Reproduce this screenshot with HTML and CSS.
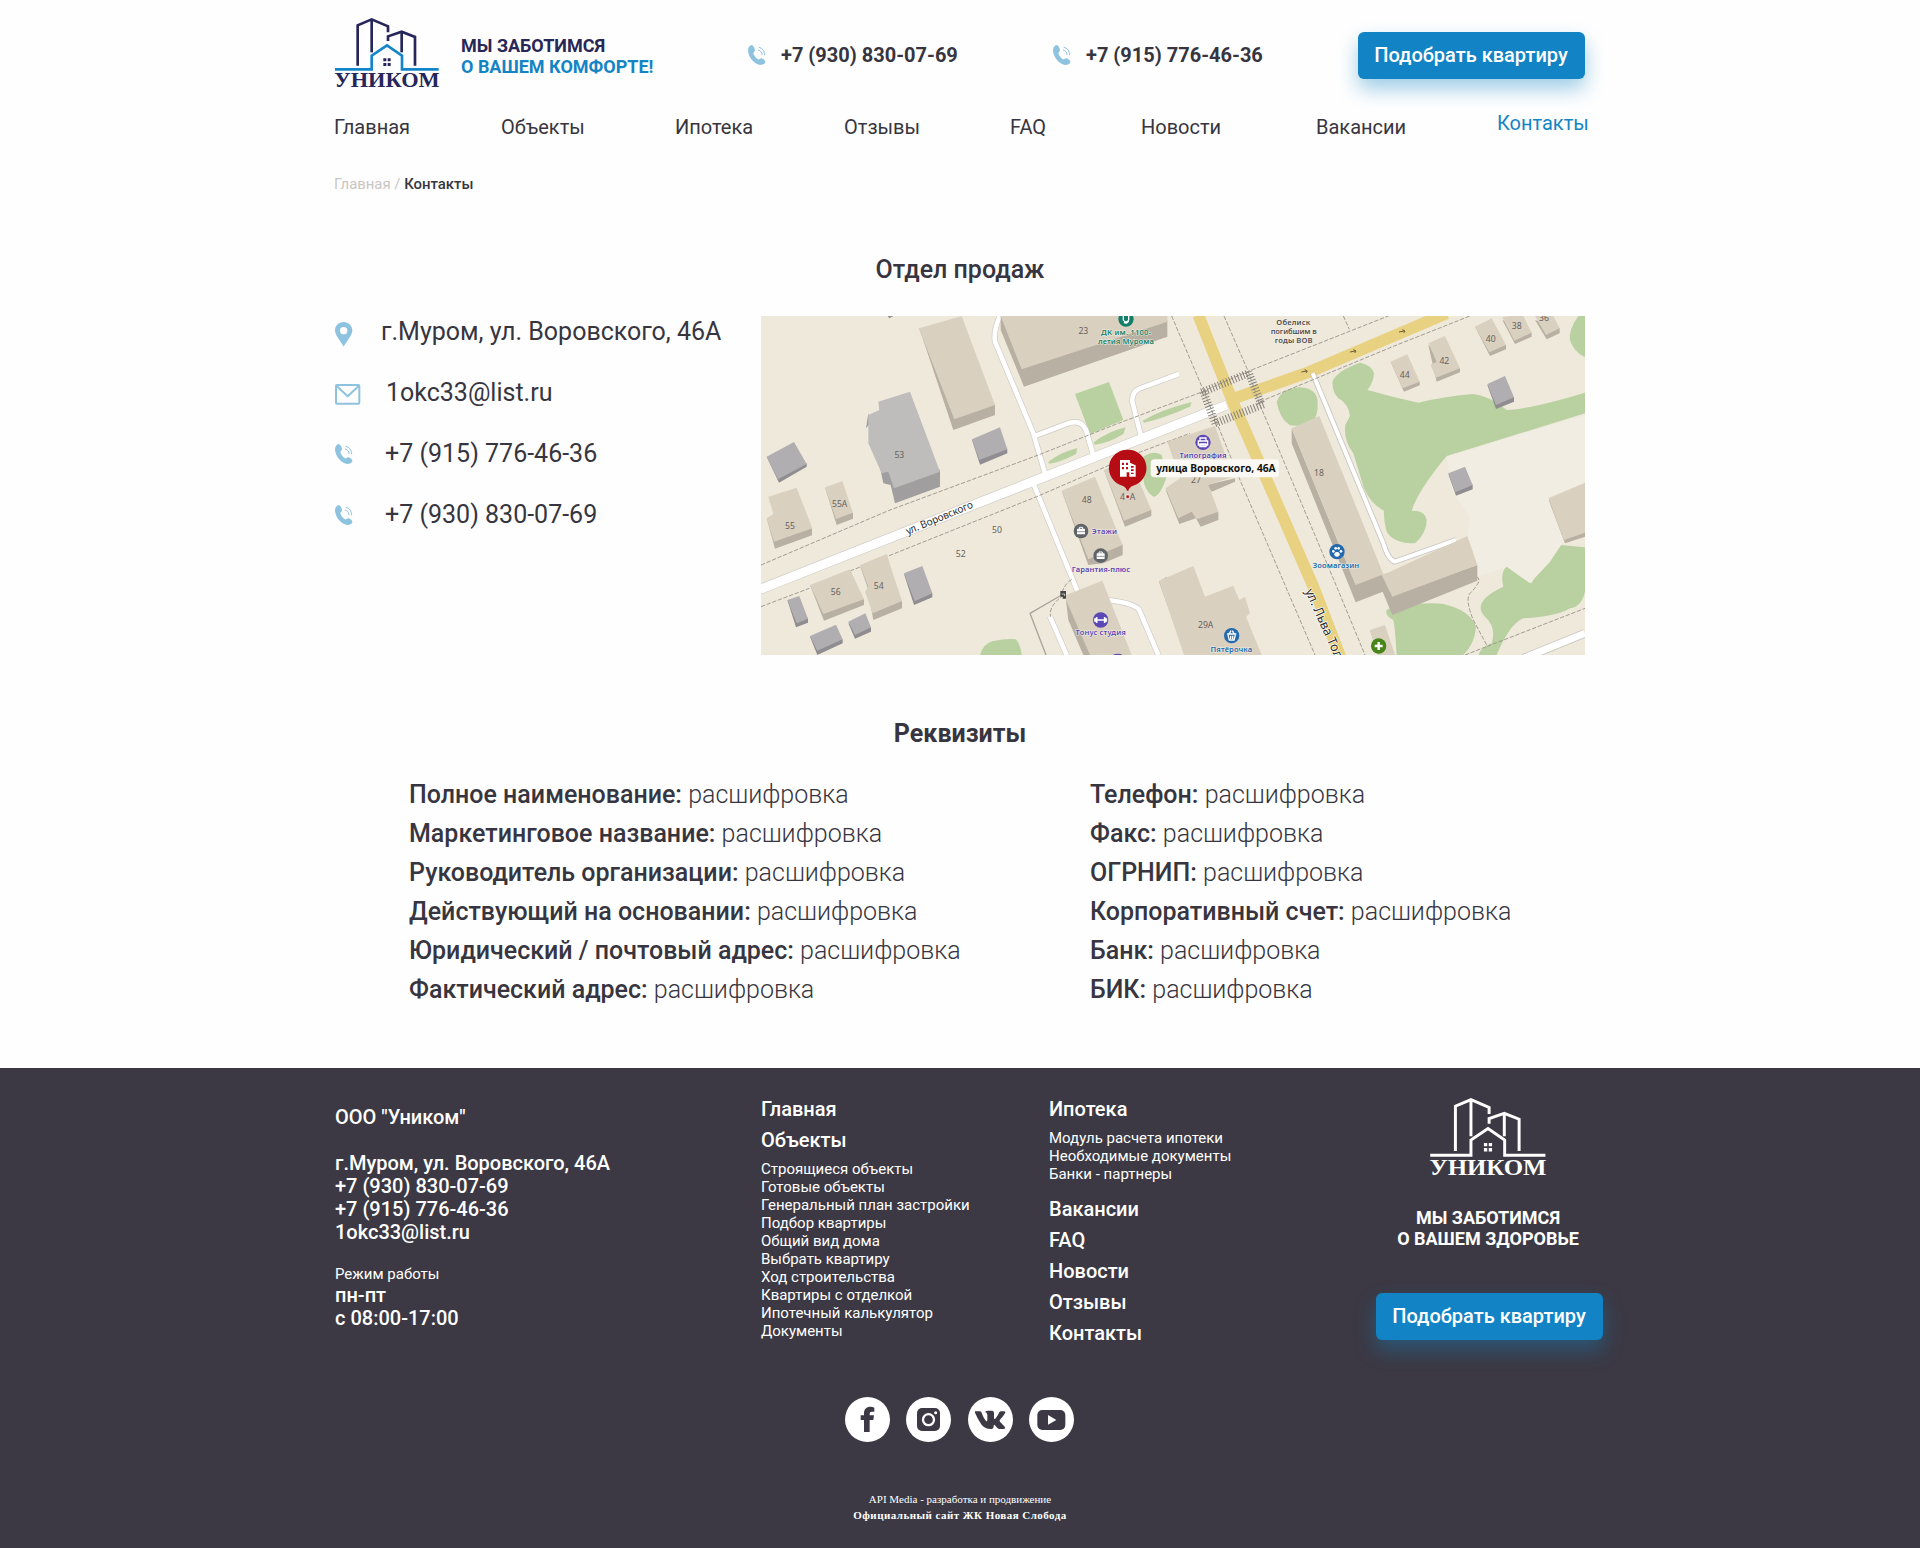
FILE: index.html
```html
<!DOCTYPE html>
<html lang="ru">
<head>
<meta charset="utf-8">
<title>Уником — Контакты</title>
<link rel="stylesheet" href="styles.css">
</head>
<body>
<svg class="defs" width="0" height="0" aria-hidden="true">
  <symbol id="logo" viewBox="42 52 318 216">
    <g fill="none" stroke="currentColor" stroke-width="8">
      <path d="M113 198V77L155 59L204 80V98"/>
      <path d="M155 59V158"/>
      <path d="M204 124V110L245 96L285 112V198"/>
      <path d="M245 96V158"/>
    </g>
    <path class="logo-roof" fill="none" stroke-width="8" d="M45 209H155V168L201 137L246 168V209H356"/>
    <path fill="currentColor" d="M190 176h9v9h-9zM203 176h9v9h-9zM190 190h9v9h-9zM203 190h9v9h-9z"/>
    <text class="logo-text" x="43" y="263" textLength="316" lengthAdjust="spacingAndGlyphs" fill="currentColor">УНИКОМ</text>
  </symbol>
  <symbol id="phone" viewBox="0 0 54 60">
    <path fill="currentColor" d="M10 0C4 2 0 8 0 17C2 38 18 56 36 60C44 60 52 56 52 50C52 46 44 40 40 40C36 40 34 44 30 43C24 40 18 32 16 25C16 22 21 20 21 16C21 10 16 0 10 0Z"/>
    <path fill="none" stroke="currentColor" stroke-width="3" d="M32 7C43 9 50 18 50 31M30 15C37 16 42 22 42 30"/>
  </symbol>
</svg>

<header class="wrap">
  <div class="top">
    <svg class="logo" width="106" height="72"><use href="#logo"/></svg>
    <p class="slogan">МЫ ЗАБОТИМСЯ<br><span>О ВАШЕМ КОМФОРТЕ!</span></p>
    <a class="tel"><svg class="icon" width="18" height="20"><use href="#phone"/></svg>+7 (930) 830-07-69</a>
    <a class="tel"><svg class="icon" width="18" height="20"><use href="#phone"/></svg>+7 (915) 776-46-36</a>
    <a class="btn">Подобрать квартиру</a>
  </div>
  <nav class="nav">
    <a>Главная</a><a>Объекты</a><a>Ипотека</a><a>Отзывы</a><a>FAQ</a><a>Новости</a><a>Вакансии</a><a class="active">Контакты</a>
  </nav>
  <p class="crumbs">Главная / <b>Контакты</b></p>
</header>

<main class="wrap">
  <h1>Отдел продаж</h1>
  <section class="sales">
    <ul class="contacts">
      <li class="addr"><svg class="icon pin" width="18" height="25" viewBox="0 0 54 75"><path fill="currentColor" fill-rule="evenodd" d="M26 0C11 0 0 11 0 25C0 41 17 57 26 74C35 57 52 41 52 25C52 11 41 0 26 0ZM26 15A11 11 0 1 1 26 37A11 11 0 1 1 26 15Z"/></svg>г.Муром, ул. Воровского, 46А</li>
      <li class="mail"><svg class="icon envelope" width="26" height="21" viewBox="0 0 78 63"><g fill="none" stroke="currentColor" stroke-width="6" stroke-linejoin="round"><rect x="3" y="3" width="70" height="56" rx="3"/><path d="M4 5L38 37L72 5"/></g></svg>1okc33@list.ru</li>
      <li><svg class="icon" width="18" height="20"><use href="#phone"/></svg>+7 (915) 776-46-36</li>
      <li><svg class="icon" width="18" height="20"><use href="#phone"/></svg>+7 (930) 830-07-69</li>
    </ul>
    <svg class="map" width="824" height="339" viewBox="3 18 2472 1017">
      <rect x="3" y="18" width="2472" height="1017" fill="#eee9db"/>
      <!-- parks -->
      <g fill="#b9d1a1">
        <path d="M945 252L1047 216L1090 330L990 372Z"/>
        <path d="M865 455Q900 428 952 414L948 432Q900 458 866 461Z"/>
        <path d="M1000 398Q1040 366 1097 352L1090 372Q1045 400 1005 404Z"/>
        <path d="M1148 332Q1200 300 1295 276L1290 290Q1210 325 1152 338Z"/>
        <path d="M1150 440Q1180 420 1205 435L1220 500Q1200 560 1180 560Q1150 540 1150 500Z"/>
        <path d="M660 1035Q670 1000 700 993Q740 985 768 988Q782 1005 785 1035Z"/>
        <path d="M1550 275Q1565 235 1620 232Q1670 235 1673 275Q1675 320 1655 338Q1625 350 1590 346Q1558 325 1550 275Z"/>
        <path d="M1718 212Q1735 180 1800 158Q1835 165 1842 190Q1840 220 1822 240Q1900 262 1975 278Q2060 258 2140 252Q2190 258 2240 300Q2300 300 2475 248V310L2060 438Q1975 540 1955 602Q1995 600 2000 630Q2000 670 1965 700Q1900 700 1880 665Q1870 630 1872 602Q1830 580 1812 535Q1795 480 1780 430Q1750 390 1756 345L1770 318Q1765 280 1735 265Q1715 245 1718 212Z"/>
        <path d="M2455 18Q2425 60 2430 90Q2440 125 2475 142V18Z"/>
        <path d="M1878 905Q1880 895 1900 893Q1990 875 2050 882Q2130 900 2148 950Q2145 1000 2110 1035H1910Q1905 950 1900 930Q1880 920 1878 905Z"/>
        <path d="M2162 890Q2165 860 2230 830Q2220 785 2240 770Q2262 770 2315 820Q2330 780 2370 755Q2365 710 2400 705L2475 712V845Q2465 890 2430 895Q2390 920 2290 925Q2250 940 2210 1035H2155Q2165 1010 2195 1000Q2210 950 2175 920Q2160 905 2162 890Z"/>
      </g>
      <path fill="#f1ede2" d="M2060 440L2475 315V520L2365 560L2410 695L2370 755L2310 820L2240 770L2150 800L2120 690L2130 620L2080 550Z"/>
      <!-- streets -->
      <g fill="none" stroke-linejoin="round" stroke-linecap="butt">
        <g stroke="#cfcbc6">
          <path stroke-width="31" d="M0 838L860 498L1400 285"/>
          <path stroke-width="18" d="M720 18Q700 60 705 95L820 370L858 500M820 380L930 338Q965 330 978 360L1000 435M820 520L955 850M1142 375L1117 275Q1115 245 1140 235L1257 192M870 920L920 1035M1035 870Q1110 875 1137 898L1195 1035"/>
        </g>
        <g stroke="#fff">
          <path stroke-width="27" d="M0 838L860 498L1400 285"/>
          <path stroke-width="14" d="M720 18Q700 60 705 95L820 370L858 500M820 380L930 338Q965 330 978 360L1000 435M820 520L955 850M1142 375L1117 275Q1115 245 1140 235L1257 192M870 920L920 1035M1035 870Q1110 875 1137 898L1195 1035"/>
        </g>
        <path stroke="#c9c5c0" stroke-width="26" d="M2290 1045L2475 970"/>
        <path stroke="#fff" stroke-width="21" d="M2290 1045L2475 970"/>
        <path stroke="#e8d281" stroke-width="35" d="M1315 15L1420 280L1660 830L1745 1050M1415 268L1650 185L2060 10"/>
        <path stroke="#c9c5c0" stroke-width="17" d="M1658 190L1870 700Q1885 750 1905 755L2088 690"/>
        <path stroke="#fff" stroke-width="12" d="M1658 190L1870 700Q1885 750 1905 755L2088 690"/>
        <path stroke="#aaa59b" stroke-width="4" d="M905 855L810 910L858 1035"/>
        <g stroke="#918c83" stroke-width="2.5" stroke-dasharray="13 5">
          <path d="M3 765L385 602L835 435L1075 340L1320 248L1462 185L1885 18M3 890L148 835M270 783L380 740L830 560L1130 430L1290 370"/>
          <path d="M1235 18L1330 240L1375 350L1440 510L1665 1035M1392 18L1465 185L1500 285L1730 830L1815 1035M1500 275L1905 107L2130 18M1750 18L1768 58"/>
          <path d="M2150 800Q2170 810 2130 850Q2115 870 2140 930L2180 1005M2115 1035L2475 895M935 808Q905 830 905 860Q865 890 872 920"/>
        </g>
      </g>
      <g fill="none" stroke="#858179" stroke-width="24" stroke-dasharray="3 6">
        <path d="M1325 247L1465 190M1465 185L1505 285M1365 340L1510 283M1330 245L1368 345"/>
      </g>
      <!-- building walls -->
      <g fill="#b8b0a2">
        <path d="M477 55L488 85L580 360L705 315V285Z"/><path d="M722 18V60L792 230L1222 80V30Z"/>
        <path d="M20 625L45 716L156 676V655Z"/><path d="M195 532L230 645L279 626V610Z"/>
        <path d="M150 825L192 932L312 885V868Z"/><path d="M300 768L322 830L340 930L426 895V875Z"/>
        <path d="M905 542L985 765L1030 760L1088 735V705Z"/><path d="M1032 480L1095 650L1174 618V600Z"/>
        <path d="M918 870L925 930L970 1035H1050V870Z"/><path d="M1217 540L1258 642L1308 625L1322 650L1375 630V605Z"/>
        <path d="M1595 355V400L1787 877L1868 845L1897 915L2152 812V765L1897 855L1865 790L1785 820Z"/>
        <path d="M1340 525L1425 505V515L1355 545Z"/><path d="M1197 815L1275 1035H1330L1220 800Z"/>
        <path d="M2366 570L2415 700L2475 680V600Z"/><path d="M1892 155L1932 245L1979 226V215Z"/>
        <path d="M2005 105L2030 215L2100 187V175Z"/><path d="M2145 50L2190 138L2238 118V105Z"/>
        <path d="M2227 30L2265 102L2315 80V68ZM2325 30L2360 88L2399 70V55ZM1830 960L1855 1035H1905L1860 970Z"/>
      </g>
      <!-- building roofs -->
      <g fill="#dad0c0">
        <path d="M477 55L605 18L705 285L583 328Z"/><path d="M722 18H1222V35L785 178Z"/>
        <path d="M25 560L110 533L157 655L42 695L20 625L40 612Z"/><path d="M195 532L247 514L279 608L228 627Z"/>
        <path d="M150 825L270 778L312 868L190 912Z"/><path d="M300 765L380 732L400 795L426 873L338 910L315 845L325 830Z"/>
        <path d="M905 542L1005 500L1088 705L985 748Z"/><path d="M1032 480L1110 450L1174 600L1092 632Z"/>
        <path d="M918 855L1027 812L1115 1035H990L918 870Z"/><path d="M1222 395L1365 348L1420 500L1345 525L1375 605L1310 628L1295 605L1255 625L1217 535L1260 505Z"/>
        <path d="M1595 355L1678 318L1870 792L1890 785L2122 678L2152 765L1897 860L1865 795L1787 825Z"/>
        <path d="M1197 812L1300 768L1335 860L1420 827L1438 870L1455 860L1470 910L1458 920L1505 1035H1272Z"/>
        <path d="M2366 565L2475 518V668L2412 690Z"/><path d="M1892 155L1942 133L1979 215L1928 235Z"/>
        <path d="M2005 100L2055 78L2100 175L2028 203L2012 165L2030 155Z"/><path d="M2145 50L2195 25L2238 105L2188 127Z"/>
        <path d="M2227 22L2250 18H2290L2315 68L2263 92ZM2325 18H2380L2399 55L2358 75ZM1830 960L1875 945L1905 1035H1855Z"/>
      </g>
      <g fill="#8f8d90">
        <path fill="#a09e9e" d="M318 355L325 310L370 520L392 525L405 580L540 530V480L330 340Z"/>
        <path d="M20 440L57 518L140 470V460Z"/><path d="M636 390L660 464L742 430V418Z"/>
        <path d="M82 870L108 952L144 938V925ZM150 980L172 1035L248 1000V988ZM265 940L285 986L333 965V952ZM432 792L462 885L517 862V850Z"/>
        <path d="M2182 225L2208 297L2262 275V262ZM2065 492L2088 557L2138 538V524ZM383 18L388 25L400 18Z"/>
      </g>
      <path fill="#bfbdbb" d="M355 275L450 245L540 485L402 535L385 485L365 490L325 400V315L358 300Z"/>
      <g fill="#b1aeb2">
        <path d="M20 440L102 396L140 462L54 508Z"/><path d="M636 388L720 352L742 418L658 450Z"/>
        <path d="M82 870L118 858L144 926L110 940Z"/><path d="M150 978L228 944L248 988L172 1022Z"/><path d="M265 935L316 910L333 952L285 975Z"/><path d="M432 790L487 768L517 850L464 874Z"/>
        <path d="M2182 222L2235 198L2262 262L2208 285Z"/><path d="M2065 490L2115 470L2138 525L2086 547Z"/>
      </g>
      <!-- house numbers -->
      <g class="num">
        <text x="970" y="73">23</text><text x="418" y="444">53</text><text x="239" y="592">55А</text><text x="90" y="656">55</text>
        <text x="711" y="669">50</text><text x="602" y="742">52</text><text x="356" y="838">54</text><text x="227" y="855">56</text>
        <text x="980" y="580">48</text><text x="1103" y="570">4&#8199;А</text><text x="1308" y="518">27</text><text x="1677" y="498">18</text>
        <text x="1337" y="953">29А</text><text x="1934" y="205">44</text><text x="2053" y="163">42</text><text x="2192" y="95">40</text>
        <text x="2270" y="56">38</text><text x="2352" y="34">36</text>
      </g>
      <g class="street">
        <text transform="translate(443 674) rotate(-22.5)" textLength="214" lengthAdjust="spacingAndGlyphs">ул. Воровского</text>
        <text class="avenue" transform="translate(1635 843) rotate(66)" textLength="225" lengthAdjust="spacingAndGlyphs">ул. Льва Тол</text>
      </g>
      <!-- places -->
      <g class="poi">
        <g fill="#128068"><circle cx="1098" cy="27" r="23"/><text x="1098" y="75" textLength="150">ДК им. 1100-</text><text x="1098" y="102" textLength="168">летия Мурома</text></g>
        <g fill="#514e50"><text x="1600" y="44" textLength="102">Обелиск</text><text x="1601" y="71" textLength="138">погибшим в</text><text x="1601" y="98" textLength="113">годы ВОВ</text></g>
        <g fill="#5f6468"><circle cx="963" cy="663" r="22"/><circle cx="1022" cy="737" r="22"/></g>
        <g fill="#5b47b5"><circle cx="1022" cy="930" r="23"/><circle cx="1329" cy="397" r="23"/><path d="M1058 1035Q1075 1028 1088 1035Z"/>
          <text x="1033" y="671" textLength="76">Этажи</text><text x="1023" y="785" textLength="175">Гарантия-плюс</text><text x="1022" y="976" textLength="151">Тонус студия</text><text x="1329" y="445" textLength="141">Типография</text></g>
        <g fill="#2269ae"><circle cx="1731" cy="725" r="23"/><circle cx="1415" cy="977" r="23"/>
          <text x="1728" y="773" textLength="139">Зоомагазин</text><text x="1414" y="1026" textLength="125">Пятёрочка</text></g>
        <circle cx="1856" cy="1008" r="23" fill="#468518"/>
      </g>
      <g fill="#fff">
        <rect x="951" y="656" width="24" height="17" rx="2"/><rect x="1010" y="730" width="24" height="17" rx="2"/>
      </g>
      <path fill="none" stroke="#5f6468" stroke-width="2" d="M951 665h24M1010 739h24"/>
      <g fill="none" stroke="#fff" stroke-width="4">
        <path stroke-width="3" d="M958 657v-5h10v5M1017 731v-5h10v5"/>
        <path stroke-width="5" d="M1010 921v18M1034 921v18M1005 925v10M1039 925v10M1012 930h20"/>
        <path d="M1315 393h28v12h-28zM1320 391v-7h18v7M1320 402h18v8h-18z"/>
        <path d="M1401 972h28M1404 975l4 15h14l4-15M1408 971l5-9M1422 971l-5-9M1412 977v10M1418 977v10"/>
        <path stroke-width="7" d="M1844 1008h24M1856 996v24"/>
        <path d="M1090 18v12q8 12 16 0v-12M1092 37q8 6 14-4"/>
      </g>
      <g fill="#fff"><ellipse cx="1731" cy="733" rx="8" ry="7"/><circle cx="1720" cy="724" r="4"/><circle cx="1727" cy="715" r="4"/><circle cx="1736" cy="715" r="4"/><circle cx="1743" cy="724" r="4"/></g>
      <path fill="#454545" d="M901 843h17v23h-10v-6h-7z"/><path fill="none" stroke="#fff" stroke-width="2" d="M905 852h9v6"/>
      <path fill="none" stroke="#6d5e35" stroke-width="3" d="M1624 186l16-3m-6-4l8 4l-4 6M1770 126l16-3m-6-4l8 4l-4 6M1917 66l16-3m-6-4l8 4l-4 6"/>
      <!-- address pin -->
      <rect x="1172" y="448" width="385" height="54" rx="12" fill="#faf9f5"/>
      <text class="pin-label" x="1189" y="486" textLength="358" lengthAdjust="spacingAndGlyphs">улица Воровского, 46А</text>
      <path fill="#b60c14" d="M1103 419a55 55 0 0 1 16 108q-11 4-14 15h-4q-3-11-14-15a55 55 0 0 1 16-108z"/>
      <path fill="#b60c14" stroke="#fff" stroke-width="2" d="M1098 555h10v10h-10z"/>
      <path fill="#fff" fill-rule="evenodd" d="M1080 450h30v8l17 8v34h-19v-13h-8v13h-20zM1086 458v7h6v-7zM1098 458v7h6v-7zM1086 471v7h6v-7zM1098 471v7h6v-7zM1113 468v5h8v-5zM1113 478v5h8v-5zM1113 488v4h8v-4z"/>
    </svg>
  </section>

  <h2>Реквизиты</h2>
  <section class="details">
    <dl>
      <div><dt>Полное наименование:</dt> <dd>расшифровка</dd></div>
      <div><dt>Маркетинговое название:</dt> <dd>расшифровка</dd></div>
      <div><dt>Руководитель организации:</dt> <dd>расшифровка</dd></div>
      <div><dt>Действующий на основании:</dt> <dd>расшифровка</dd></div>
      <div><dt>Юридический / почтовый адрес:</dt> <dd>расшифровка</dd></div>
      <div><dt>Фактический адрес:</dt> <dd>расшифровка</dd></div>
    </dl>
    <dl>
      <div><dt>Телефон:</dt> <dd>расшифровка</dd></div>
      <div><dt>Факс:</dt> <dd>расшифровка</dd></div>
      <div><dt>ОГРНИП:</dt> <dd>расшифровка</dd></div>
      <div><dt>Корпоративный счет:</dt> <dd>расшифровка</dd></div>
      <div><dt>Банк:</dt> <dd>расшифровка</dd></div>
      <div><dt>БИК:</dt> <dd>расшифровка</dd></div>
    </dl>
  </section>
</main>

<footer class="footer">
  <div class="foot-grid">
    <div class="company">
      <p>ООО "Уником"</p>
      <p class="reach">г.Муром, ул. Воровского, 46А<br>+7 (930) 830-07-69<br>+7 (915) 776-46-36<br>1okc33@list.ru</p>
      <p class="hours-title">Режим работы</p>
      <p>пн-пт<br>с 08:00-17:00</p>
    </div>
    <div class="links">
      <a>Главная</a>
      <a>Объекты</a>
      <ul>
        <li>Строящиеся объекты</li><li>Готовые объекты</li><li>Генеральный план застройки</li><li>Подбор квартиры</li><li>Общий вид дома</li><li>Выбрать квартиру</li><li>Ход строительства</li><li>Квартиры с отделкой</li><li>Ипотечный калькулятор</li><li>Документы</li>
      </ul>
    </div>
    <div class="links">
      <a>Ипотека</a>
      <ul>
        <li>Модуль расчета ипотеки</li><li>Необходимые документы</li><li>Банки - партнеры</li>
      </ul>
      <a>Вакансии</a>
      <a>FAQ</a>
      <a>Новости</a>
      <a>Отзывы</a>
      <a>Контакты</a>
    </div>
    <div class="brand">
      <svg class="logo-light" width="118" height="80"><use href="#logo"/></svg>
      <p class="slogan">МЫ ЗАБОТИМСЯ<br>О ВАШЕМ ЗДОРОВЬЕ</p>
      <a class="btn">Подобрать квартиру</a>
    </div>
  </div>
  <div class="social">
    <svg width="45" height="45" viewBox="0 0 135 135"><circle cx="67.500" cy="67.500" r="67.500" fill="#fff"/><path fill="currentColor" d="M57 105V69H47V55H57V48C57 36 65 29 76 29Q83 29 88 32V44H80Q74 44 74 50V55H87L85 69H74V105Z"/></svg>
    <svg width="45" height="45" viewBox="0 0 135 135"><circle cx="67.500" cy="67.500" r="67.500" fill="#fff"/><rect x="33" y="33" width="69" height="69" rx="15" fill="currentColor"/><circle cx="67.500" cy="68" r="16.500" fill="none" stroke="#fff" stroke-width="7"/><circle cx="89" cy="47" r="4.500" fill="#fff"/></svg>
    <svg width="45" height="45" viewBox="0 0 135 135"><circle cx="67.500" cy="67.500" r="67.500" fill="#fff"/><path fill="currentColor" d="M21 43H36Q40 43 42 50Q47 64 54 72Q58 75 58 68V53Q57 46 51 45Q54 41 60 41H73Q78 42 78 49V64Q79 68 82 65Q90 56 94 46Q96 43 99 43H108Q114 43 111 49Q106 58 96 68Q93 71 96 74L110 89Q114 95 107 96H95Q91 96 88 93L80 84Q77 82 77 88Q77 96 72 96H66Q46 96 36 76Q27 61 21 47Z"/></svg>
    <svg width="45" height="45" viewBox="0 0 135 135"><circle cx="67.500" cy="67.500" r="67.500" fill="#fff"/><rect x="25" y="39" width="84" height="60" rx="15" fill="currentColor"/><path fill="#fff" d="M57 54L82 69L57 83Z"/></svg>
  </div>
  <p class="credits"><span>API Media - разработка и продвижение</span><b>Официальный сайт ЖК Новая Слобода</b></p>
</footer>
</body>
</html>
```
FILE: styles.css
```css
* { box-sizing: border-box; margin: 0; padding: 0; }
body { background: #fefefe; color: #37353f; font-family: Roboto, "Liberation Sans", sans-serif; width: 1920px; }
ul { list-style: none; }
.defs { display: block; }
.wrap { width: 1252px; margin: 0 auto; }
.icon { color: #8ec3e0; flex: none; }

.top { display: grid; grid-template-columns: 127px 287px 305px 305px 227px; align-items: center; height: 111px; }
.logo { --roof: #1485c8; color: #26265a; margin-bottom: 5px; }
.logo-roof { stroke: var(--roof); }
.logo-text { font: bold 61px "Liberation Serif", serif; }
.slogan { font-size: 18px; line-height: 21px; font-weight: 700; color: #292755; }
.slogan span { color: #1384c4; }
.tel { display: flex; align-items: center; gap: 15px; font-size: 20px; line-height: 24px; font-weight: 700; margin-bottom: 1px; }
.btn { display: flex; align-items: center; justify-content: center; width: 227px; height: 47px; padding: 0 1px 1px 0; border-radius: 6px; background: #1284c5; color: #fff; font-size: 20px; font-weight: 500; box-shadow: 0 10px 20px rgba(18, 132, 197, .4); }

.nav { display: grid; grid-template-columns: 167px 174px 169px 166px 131px 175px 181px auto; margin-top: 4px; font-size: 20px; line-height: 24px; }
.nav .active { color: #1384c4; margin-top: -4px; }
.crumbs { margin-top: 36px; font-size: 14.900px; line-height: 18px; color: #c9c6c4; }
.crumbs b { color: #37353f; font-weight: 500; }

h1, h2 { font-size: 25px; line-height: 30px; text-align: center; font-weight: 500; }
h1 { margin-top: 62px; }
h2 { margin-top: 64px; font-weight: 700; }
.sales { display: flex; justify-content: space-between; margin-top: 31px; padding: 0 1px; }
.map { display: block; }
.contacts { margin-top: -15px; font-size: 25px; }
.contacts li { display: flex; align-items: center; gap: 32px; height: 61px; line-height: 30px; }
.contacts .addr { gap: 28px; }
.contacts .mail { gap: 25px; }
.contacts .pin { margin-top: 5px; }
.contacts .envelope { margin-top: 4px; }

.num { font: 26px "Noto Sans", sans-serif; fill: #66615c; text-anchor: middle; }
.street { font: 31px "Noto Sans", sans-serif; fill: #2e2c2c; stroke: #fff; stroke-width: 4px; paint-order: stroke; }
.avenue { font-size: 38px; }
.poi { font: 600 23px "Noto Sans", sans-serif; text-anchor: middle; }
.poi text { stroke: #f2eee4; stroke-width: 3px; paint-order: stroke; }
.pin-label { font: bold 30px "Noto Sans", sans-serif; fill: #111; }

.details { display: grid; grid-template-columns: 681px 1fr; padding-left: 75px; margin-top: 26px; font-size: 25px; line-height: 39px; height: 293px; }
dt, dd { display: inline; }
dt { font-weight: 500; }
dd { font-weight: 300; }

.footer { background: #3c3944; color: #fff; height: 480px; overflow: hidden; }
.foot-grid { display: grid; grid-template-columns: 426px 288px 327px 227px; margin-left: 335px; height: 329px; font-weight: 500; font-size: 20px; line-height: 23px; }
.company { padding-top: 38px; }
.reach { margin-top: 23px; }
.hours-title { margin-top: 18px; font-size: 15px; font-weight: 400; line-height: 22px; padding-top: 1px; margin-bottom: -1px; }
.links { padding-top: 26px; }
.links a { display: block; line-height: 31px; }
.links ul { font-size: 15px; line-height: 18px; font-weight: 400; margin: 4px 0 11px; }
.brand { display: flex; flex-direction: column; align-items: center; padding-top: 29px; }
.brand .slogan { color: #fff; text-align: center; margin: 30px 3px 0 0; }
.brand .btn { margin-top: 44px; }
.logo-light { --roof: #fff; color: #fff; flex: none; margin-right: 3px; }
.social { display: flex; justify-content: center; gap: 16.300px; color: #3c3944; padding-right: 1px; }
.credits { display: flex; flex-direction: column; align-items: center; margin-top: 49px; font: 11px/16px "Liberation Serif", serif; }
.credits b { letter-spacing: .45px; }
```
